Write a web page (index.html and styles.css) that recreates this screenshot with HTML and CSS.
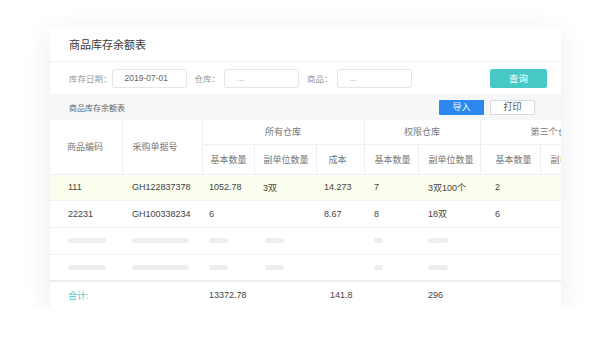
FILE: index.html
```html
<!DOCTYPE html>
<html lang="zh-CN">
<head>
    <meta charset="UTF-8">
    <title>商品库存余额表</title>
    <link rel="stylesheet" href="styles.css">
</head>
<body>
    <div class="card">
        <div class="card-title">商品库存余额表</div>
        <div class="filter">
            <span class="label first">库存日期：</span>
            <div class="input">2019-07-01</div>
            <span class="label">仓库：</span>
            <div class="input muted">...</div>
            <span class="label">商品：</span>
            <div class="input muted">...</div>
            <div class="btn-query">查询</div>
        </div>
        <div class="toolbar">
            <span class="toolbar-title">商品库存余额表</span>
            <div class="btn btn-blue">导入</div>
            <div class="btn btn-line">打印</div>
        </div>
        <table class="grid">
            <colgroup>
                <col style="width:72px">
                <col style="width:80px">
                <col style="width:52px">
                <col style="width:62px">
                <col style="width:48px">
                <col style="width:54px">
                <col style="width:62px">
                <col style="width:60px">
                <col style="width:60px">
            </colgroup>
            <thead>
                <tr class="head-top">
                    <th rowspan="2" class="c1">商品编码</th>
                    <th rowspan="2" class="c2">采购单据号</th>
                    <th colspan="3" class="group">所有仓库</th>
                    <th colspan="2" class="group">权限仓库</th>
                    <th colspan="2" class="group g3">第三个仓库</th>
                </tr>
                <tr class="head-sub">
                    <th class="c3">基本数量</th>
                    <th class="c4">副单位数量</th>
                    <th class="c5">成本</th>
                    <th class="c6">基本数量</th>
                    <th class="c7">副单位数量</th>
                    <th class="c8">基本数量</th>
                    <th class="c9">副单位数量</th>
                </tr>
            </thead>
            <tbody>
                <tr class="row-hl">
                    <td>111</td>
                    <td>GH122837378</td>
                    <td>1052.78</td>
                    <td>3双</td>
                    <td>14.273</td>
                    <td>7</td>
                    <td>3双100个</td>
                    <td>2</td>
                    <td></td>
                </tr>
                <tr>
                    <td>22231</td>
                    <td>GH100338234</td>
                    <td>6</td>
                    <td></td>
                    <td>8.67</td>
                    <td>8</td>
                    <td>18双</td>
                    <td>6</td>
                    <td></td>
                </tr>
                <tr class="skeleton">
                    <td><i class="bar w38"></i></td>
                    <td><i class="bar w57"></i></td>
                    <td><i class="bar w19"></i></td>
                    <td><i class="bar w19 sh2"></i></td>
                    <td></td>
                    <td><i class="bar w9"></i></td>
                    <td><i class="bar w20"></i></td>
                    <td></td>
                    <td></td>
                </tr>
                <tr class="skeleton">
                    <td><i class="bar w38"></i></td>
                    <td><i class="bar w57"></i></td>
                    <td><i class="bar w19"></i></td>
                    <td><i class="bar w19 sh2"></i></td>
                    <td></td>
                    <td><i class="bar w9"></i></td>
                    <td><i class="bar w20"></i></td>
                    <td></td>
                    <td></td>
                </tr>
                <tr class="total">
                    <td class="sum-label">合计:</td>
                    <td></td>
                    <td>13372.78</td>
                    <td></td>
                    <td class="sum-cost">141.8</td>
                    <td></td>
                    <td>296</td>
                    <td></td>
                    <td></td>
                </tr>
            </tbody>
        </table>
    </div>
</body>
</html>
```

FILE: styles.css
```css
* {
    padding: 0px;
    margin: 0px;
    box-sizing: border-box;
}
body {
    background-color: #fff;
    font-family: "Liberation Sans", "Noto Sans CJK SC", sans-serif;
    color: #333;
}
.card {
    width: 511px;
    margin: 28px 0 0 50px;
    background-color: #fff;
    border-radius: 3px;
    overflow: hidden;
    box-shadow: 0 6px 28px rgba(30, 40, 80, 0.09);
}
.card-title {
    height: 34px;
    line-height: 34px;
    padding-left: 19px;
    font-size: 11px;
    color: #3a3a3a;
    border-bottom: 1px solid #eef0f3;
}
.filter {
    height: 32px;
    display: flex;
    align-items: center;
    padding: 0 14px 0 19px;
}
.filter .label {
    font-size: 8.5px;
    color: #999;
    margin-right: 4px;
}
.filter .label.first {
    margin-right: 0;
}
.filter .input {
    width: 75px;
    height: 19px;
    line-height: 17px;
    border: 1px solid #e4e6ea;
    border-radius: 2px;
    padding-left: 12px;
    font-size: 8.5px;
    color: #666;
    margin-right: 8px;
}
.filter .input.muted {
    color: #aaa;
}
.btn-query {
    margin-left: auto;
    width: 57px;
    height: 19px;
    line-height: 19px;
    text-align: center;
    background-color: #46c8c6;
    border-radius: 2px;
    color: #fff;
    font-size: 9.5px;
}
.toolbar {
    height: 26px;
    display: flex;
    align-items: center;
    padding: 0 26px 0 19px;
    background-color: #f6f7f9;
}
.toolbar-title {
    font-size: 8px;
    color: #666;
    margin-right: auto;
}
.btn {
    width: 45px;
    height: 15px;
    line-height: 15px;
    text-align: center;
    font-size: 9px;
    border-radius: 1px;
}
.btn-blue {
    background-color: #2a88ef;
    color: #fff;
    margin-right: 6px;
}
.btn-line {
    border: 1px solid #d8dadf;
    line-height: 13px;
    color: #555;
    background-color: #fff;
}
.grid {
    width: 550px;
    table-layout: fixed;
    border-collapse: collapse;
    font-size: 9px;
}
.grid th {
    font-weight: normal;
    color: #777;
    text-align: left;
    white-space: nowrap;
    overflow: hidden;
    border-right: 1px solid #eef0f3;
    border-bottom: 1px solid #eef0f3;
}
.grid .head-top th {
    height: 24px;
}
.grid .head-sub th {
    height: 30px;
}
.grid th.group {
    text-align: center;
}
.grid th.g3 {
    text-align: left;
    padding-left: 50px;
}
.grid .c1 { padding-left: 17px; }
.grid .c2 { padding-left: 10px; }
.grid .c3 { padding-left: 8px; }
.grid .c4 { padding-left: 9px; }
.grid .c5 { padding-left: 12px; }
.grid .c6 { padding-left: 10px; }
.grid .c7 { padding-left: 10px; }
.grid .c8 { padding-left: 15px; }
.grid .c9 { padding-left: 10px; }
.grid td {
    height: 27px;
    white-space: nowrap;
    overflow: hidden;
    border-bottom: 1px solid #f1f2f4;
    color: #444;
}
.grid td:nth-child(1) { padding-left: 18px; }
.grid td:nth-child(2) { padding-left: 10px; }
.grid td:nth-child(3) { padding-left: 7px; }
.grid td:nth-child(4) { padding-left: 9px; }
.grid td:nth-child(5) { padding-left: 8px; }
.grid td:nth-child(6) { padding-left: 10px; }
.grid td:nth-child(7) { padding-left: 10px; }
.grid td:nth-child(8) { padding-left: 15px; }
.grid td:nth-child(9) { padding-left: 10px; }
.grid .row-hl td {
    height: 26px;
    background-color: #fbfdee;
}
.bar {
    display: block;
    height: 5px;
    border-radius: 3px;
    background-color: #eeeeee;
}
.bar.sh2 { margin-left: 2px; }
.w38 { width: 38px; }
.w57 { width: 57px; }
.w19 { width: 19px; }
.w20 { width: 20px; }
.w9 { width: 9px; }
.grid .total td {
    border-top: 2px solid #eceef1;
    border-bottom: none;
}
.grid .total .sum-label {
    color: #3fcbd3;
}
.grid .total .sum-cost {
    padding-left: 14px;
}
```
